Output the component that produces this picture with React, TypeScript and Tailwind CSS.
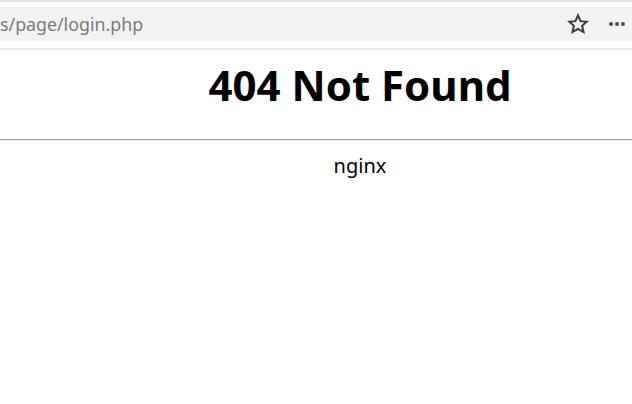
export default function App() {
  return (
    <div className="w-[632px] h-[404px] bg-white overflow-hidden" style={{ fontFamily: "'Noto Sans', 'Open Sans', sans-serif" }}>
      {/* Browser chrome */}
      <div className="h-[2px] bg-[#e1e1e1]" />
      <div className="h-[5px] bg-white" />
      <div className="h-[34px] bg-[#f2f2f2] flex items-center">
        <span className="flex-1 text-[17.8px] leading-none text-[#7b7b7b] whitespace-nowrap pt-[1px]">s/page/login.php</span>
        <svg className="w-[22px] h-[22px] mr-[20px]" viewBox="0 0 24 24" fill="none" stroke="#3d3d3d" strokeWidth={2.2} strokeLinejoin="miter">
          <polygon points="12,2.5 14.8,8.9 21.6,9.5 16.5,14 18,20.8 12,17.3 6,20.8 7.5,14 2.4,9.5 9.2,8.9" />
        </svg>
        <div className="flex gap-[2px] mr-[7px] items-center">
          <span className="w-[4px] h-[4px] rounded-full bg-[#4a4a4a]" />
          <span className="w-[4px] h-[4px] rounded-full bg-[#4a4a4a]" />
          <span className="w-[4px] h-[4px] rounded-full bg-[#4a4a4a]" />
        </div>
      </div>
      <div className="h-[7px] bg-white" />
      <div className="h-[2px] bg-[#e6e9ee]" />

      {/* Page */}
      <div className="w-[720px] text-black">
        <h1 className="pt-[11px] text-center text-[42px] leading-[48px] font-bold">404 Not Found</h1>
        <hr className="mt-[30px] border-0 border-t border-t-[#9d9d9d] border-b border-b-[#ececec]" />
        <p className="mt-[11px] text-center text-[20px] leading-[28px]">nginx</p>
      </div>
    </div>
  )
}
